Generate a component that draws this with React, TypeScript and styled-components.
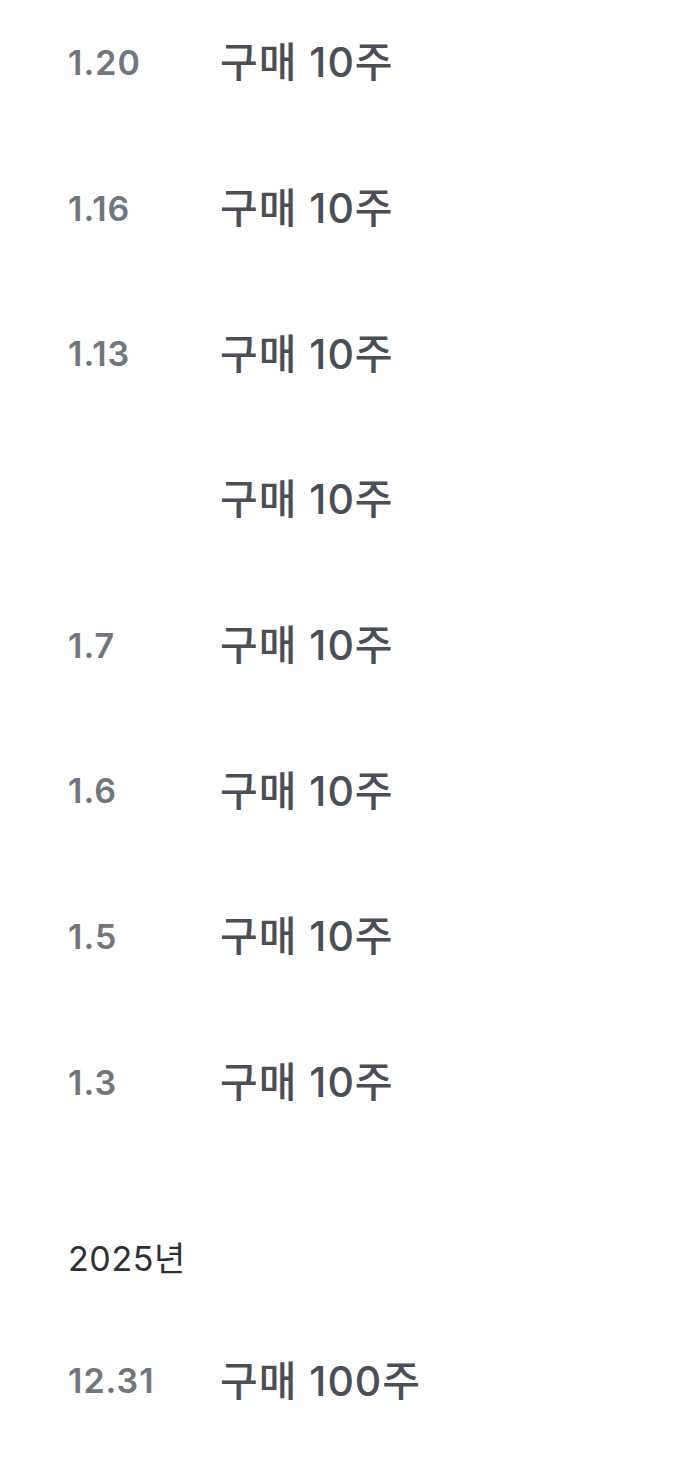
import React from "react";
import styled, { createGlobalStyle } from "styled-components";

const GlobalStyle = createGlobalStyle`
    html, body {
        margin: 0;
        padding: 0;
        background: #ffffff;
    }
    body {
        font-family: Inter, "Noto Sans CJK KR", sans-serif;
        -webkit-font-smoothing: antialiased;
    }
`;

const Page = styled.div`
    width: 684px;
    padding: 0 0 0 68px;
    box-sizing: border-box;
`;

const List = styled.div`
    margin-top: -10px;
`;

const Row = styled.div`
    display: grid;
    grid-template-columns: 152px 1fr;
    align-items: center;
    height: 145.7px;
`;

const DateText = styled.span`
    font-size: 34px;
    line-height: 1;
    font-weight: 600;
    color: #71767e;
    letter-spacing: 1px;
`;

const TradeText = styled.span`
    font-size: 41px;
    line-height: 1;
    font-weight: 500;
    color: #4b4e56;
    letter-spacing: 1px;
`;

const YearHeader = styled.div`
    font-size: 34px;
    line-height: 1;
    font-weight: 400;
    color: #2e3035;
    height: 100px;
    display: flex;
    align-items: center;
    margin-top: 53px;
    letter-spacing: 0.6px;
`;

type Trade = {
    date: string;
    label: string;
};

const trades2026: Trade[] = [
    { date: "1.20", label: "구매 10주" },
    { date: "1.16", label: "구매 10주" },
    { date: "1.13", label: "구매 10주" },
    { date: "", label: "구매 10주" },
    { date: "1.7", label: "구매 10주" },
    { date: "1.6", label: "구매 10주" },
    { date: "1.5", label: "구매 10주" },
    { date: "1.3", label: "구매 10주" },
];

const trades2025: Trade[] = [{ date: "12.31", label: "구매 100주" }];

export default function App() {
    return (
        <Page>
            <GlobalStyle />
            <List>
                {trades2026.map((t, i) => (
                    <Row key={i}>
                        <DateText>{t.date}</DateText>
                        <TradeText>{t.label}</TradeText>
                    </Row>
                ))}
            </List>
            <YearHeader>2025년</YearHeader>
            {trades2025.map((t, i) => (
                <Row key={i}>
                    <DateText>{t.date}</DateText>
                    <TradeText>{t.label}</TradeText>
                </Row>
            ))}
        </Page>
    );
}
